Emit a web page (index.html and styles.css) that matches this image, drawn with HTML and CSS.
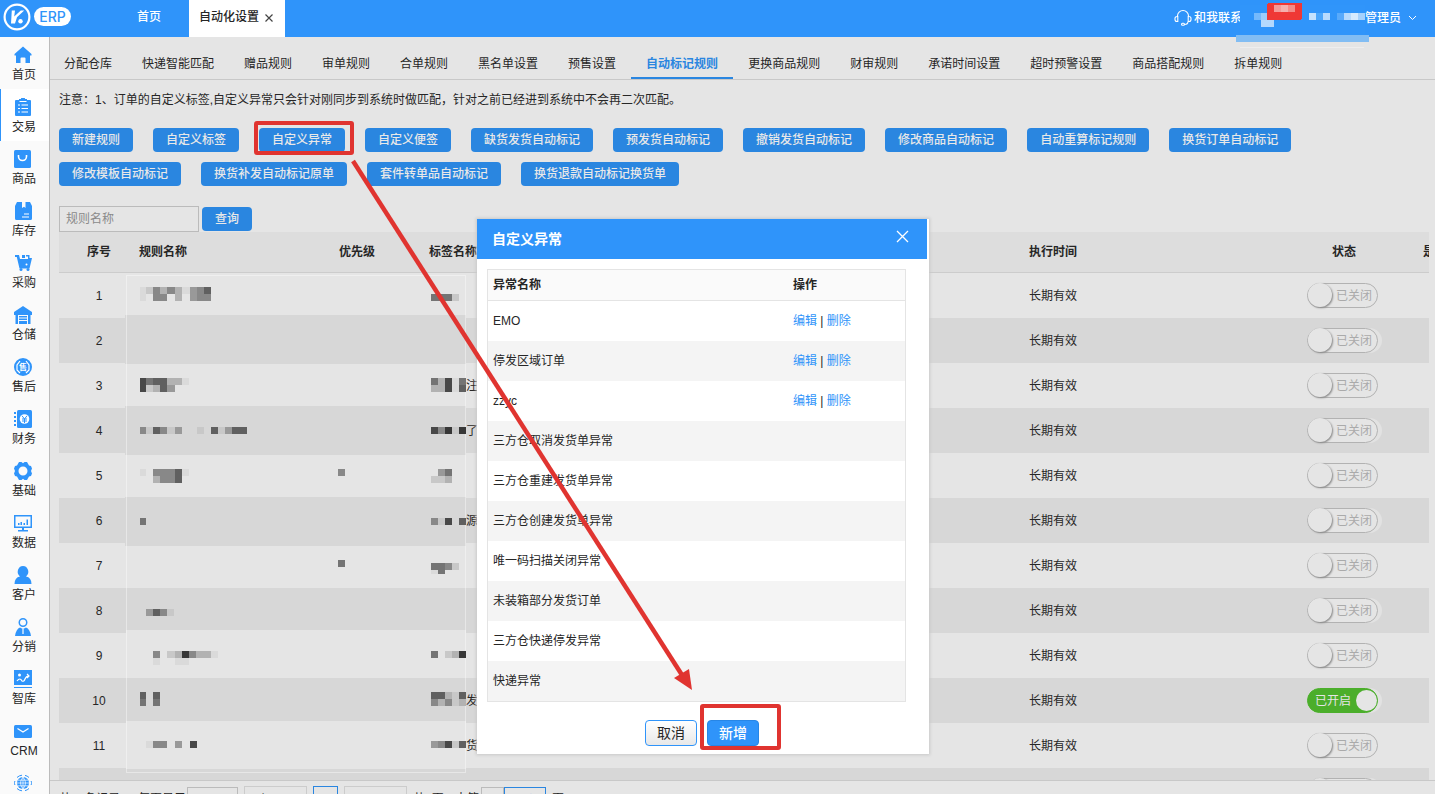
FILE: index.html
```html
<!DOCTYPE html>
<html lang="zh-CN">
<head>
<meta charset="utf-8">
<title>自动化设置</title>
<link rel="stylesheet" href="styles.css">
</head>
<body>
<div class="app">
<header class="topbar">
  <div class="brand">
    <svg class="brand-mark" width="28" height="28" viewBox="0 0 28 28"><circle cx="14" cy="14" r="12.4" fill="none" stroke="#fff" stroke-width="2.2"/><path d="M8.800 7.500h3.200l-.8 6L17.800 7.500h3.400l-7.200 6.700-2 6.400H8z" fill="#fff"/><circle cx="17.500" cy="18.300" r="2.200" fill="#fff"/></svg>
    <span class="brand-tag">ERP</span>
  </div>
  <nav class="page-tabs">
    <a class="page-tab" href="#">首页</a>
    <a class="page-tab current" href="#">自动化设置 <svg width="8" height="8" viewBox="0 0 8 8"><path d="M.5.5l7 7M7.500.5l-7 7" stroke="#444" stroke-width="1.200"/></svg></a>
  </nav>
  <div class="account">
    <a class="contact" href="#"><svg width="18" height="18" viewBox="0 0 18 18" fill="none" stroke="#fff" stroke-width="1.100"><path d="M3.500 7.500V7a5.500 5.500 0 0 1 11 0v.5M3.800 7.500H3a2 2 0 0 0-2 2v1a2 2 0 0 0 2 2h.8zM14.200 7.500h.8a2 2 0 0 1 2 2v1a2 2 0 0 1-2 2h-.8zM14 12.500c0 2-1.500 3-3.500 3"/><rect x="7.500" y="14.300" width="3" height="2" rx="1"/></svg><span>和我联系</span></a>
    <button class="user" type="button">管理员 <svg width="9" height="6" viewBox="0 0 9 6"><path d="M1 1l3.500 3.500L8 1" fill="none" stroke="#fff"/></svg></button>
    <svg class="account-mask" width="134" height="48" viewBox="1236 0 134 48" shape-rendering="crispEdges">
      <path fill="#3095fa" d="M1240 5h125v30h-125z"/>
      <path fill="#82bdf3" d="M1236 35h133v7h-133z"/>
      <path fill="#eee" d="M1240 47h124v1h-124z"/>
      <path fill="#75b9fc" d="M1254 13h7v7h-7z"/><path fill="#9cccfc" d="M1261 13h7v7h-7z"/><path fill="#b4d9fd" d="M1261 20h13v7h-13z"/>
      <path fill="#c5e2fd" d="M1309 13h7v7h-7z"/><path fill="#4ba6fb" d="M1316 13h7v7h-7z"/><path fill="#b7dafd" d="M1323 13h7v7h-7z"/>
      <path fill="#59aafb" d="M1337 13h7v7h-7z"/><path fill="#b7dafd" d="M1344 13h7v7h-7z"/><path fill="#d5eafe" d="M1351 13h7v7h-7z"/><path fill="#a5d1fc" d="M1358 13h7v7h-7z"/>
      <rect x="1267" y="3" width="35" height="17" rx="2" fill="#ef3835"/>
      <path fill="#f59a98" d="M1274 5h7v7h-7z"/><path fill="#f4b0ae" d="M1281 5h7v7h-7z"/><path fill="#f38b88" d="M1288 5h7v7h-7z"/>
    </svg>
  </div>
</header>
<div class="body">
<nav class="sidebar">
  <a href="#"><svg viewBox="0 0 18 18"><path d="M9 .5L17.500 8v1.500H16V17h-4.500v-4.500a1 1 0 0 0-1-1h-3a1 1 0 0 0-1 1V17H2V9.500H.5V8z"/></svg>首页</a>
  <a class="current" href="#"><svg viewBox="0 0 18 18"><path d="M2 2h3V1h2a2 2 0 0 1 4 0h2v1h3q1 0 1 1v14q0 1-1 1H2q-1 0-1-1V3q0-1 1-1z"/><path d="M4 7h2M7.500 7H14M4 10.500h2M7.500 10.500H14M4 14h2M7.500 14H14M5.500 3.500h7" class="line"/></svg>交易</a>
  <a href="#"><svg viewBox="0 0 18 18"><rect x="0" y="0" width="17" height="18" rx="1.500"/><path d="M4.500 5v1.500a4 4 0 0 0 8 0V5" class="line thick"/></svg>商品</a>
  <a href="#"><svg viewBox="0 0 18 18"><path d="M3 0h5v6l2-1.200L11.500 6V0H16l2 4v12.500q0 1.500-1.500 1.500h-14Q1 18 1 16.500V4z"/><path d="M10 12h5M8 15h7" class="line"/></svg>库存</a>
  <a href="#"><svg viewBox="0 0 18 18"><path d="M1 1h4l1 4h8V2.500h-2V1h3.500v3H18l-2.500 10.500H5.500L3.500 6 2.800 3H1z"/><path d="M8 1h3v3H8z"/><circle cx="7" cy="15.500" r="1.500"/><circle cx="14" cy="15.500" r="1.500"/><circle cx="12.500" cy="10.500" r="1" fill="#fff"/></svg>采购</a>
  <a href="#"><svg viewBox="0 0 18 18"><path d="M9 0l9 6v3h-1.500v9H14V9H4v9H1.500V9H0V6zM5 10h8v1.500H5zM5 12.500h8V14H5zM5 15h8v3H5z"/></svg>仓储</a>
  <a href="#"><svg viewBox="0 0 18 18"><circle cx="9" cy="9" r="9"/><path d="M6 3L3 7v5l3 3M12 3l3 4v5l-3 3" class="line"/><text x="9" y="12" text-anchor="middle" class="icon-text">售</text></svg>售后</a>
  <a href="#"><svg viewBox="0 0 18 18"><rect x="3" y="0" width="15" height="18" rx="1.500"/><path d="M0 2h2v2H0zM0 6h2v2H0zM0 10h2v2H0zM0 14h2v2H0z"/><circle cx="10.500" cy="9" r="4.800" fill="#fff"/><path d="M8 5.800L10.500 9 13 5.800M8 9h5M8 11h5M10.500 9v4" class="mark"/></svg>财务</a>
  <a href="#"><svg viewBox="0 0 18 18"><path fill-rule="evenodd" d="M5 0h2.500L9 1.200 10.500 0H13l2 3.500 2 .5 1 2.500L17 9l1 2.500-1 2.500-2 .5-2 3.500h-2.500L9 16.800 7.500 18H5l-2-3.500-2-.5-1-2.500L1 9 0 6.500 1 4l2-.5zM9 4.500a4.500 4.500 0 1 0 0 9 4.500 4.500 0 0 0 0-9z"/></svg>基础</a>
  <a href="#"><svg viewBox="0 0 18 18"><path fill-rule="evenodd" d="M0 1h18v13h-8v2h4v1.500H4V16h4v-2H0zM1.500 2.500v10h15v-10zM4 9h1.500v2H4zM6.500 8H8v3H6.500zM9.500 9H11v2H9.500zM12.500 5.500H14V11h-1.500z"/></svg>数据</a>
  <a href="#"><svg viewBox="0 0 18 18"><path d="M9 0a5.500 5.800 0 0 1 3 10.500q5.500 1 5.500 7.500H.5Q.5 11.500 6 10.500A5.500 5.800 0 0 1 9 0z"/></svg>客户</a>
  <a href="#"><svg viewBox="0 0 18 18"><path fill-rule="evenodd" d="M9 0a4.500 4.500 0 1 1 0 9 4.500 4.500 0 0 1 0-9zm0 1.500a3 3 0 1 0 0 6 3 3 0 0 0 0-6zM6 9.500l3 1.500 3-1.500q4 1.500 5 8.500H1q1-7 5-8.500z"/><path d="M9 11v5" class="line"/></svg>分销</a>
  <a href="#"><svg viewBox="0 0 18 18"><path d="M0 0h18v15H0zM0 17h18v1H0z"/><circle cx="5.500" cy="5" r="1.500" fill="#fff"/><path d="M3 11q3-4 5 0 2 1 3-2 1-3 4-3M13 4l2 2-2 2" class="line"/></svg>智库</a>
  <a href="#"><svg viewBox="0 0 18 18"><rect x="0" y="3" width="18" height="13" rx="1.500"/><path d="M3.500 6.500L9 10l5.500-3.500" class="line"/></svg>CRM</a>
  <a href="#"><svg viewBox="0 0 18 18"><circle cx="9" cy="9" r="6"/><path d="M3 9h12M9 3v12M4 6.200h10M4 11.800h10M9 3Q4 9 9 15M9 3q5 6 0 12" class="line thin"/><path d="M3 3.500a8 8 0 0 1 5-2.300M15 3.500a8 8 0 0 0-4-2.100M3 14.500a8 8 0 0 0 5 2.300M15 14.500a8 8 0 0 1-4 2.100M1 7L0 9l1 2M17 7l1 2-1 2" class="mark"/></svg></a>
</nav>
<main class="main">
  <nav class="rule-tabs">
    <a href="#">分配仓库</a><a href="#">快递智能匹配</a><a href="#">赠品规则</a><a href="#">审单规则</a><a href="#">合单规则</a><a href="#">黑名单设置</a><a href="#">预售设置</a><a class="current" href="#">自动标记规则</a><a href="#">更换商品规则</a><a href="#">财审规则</a><a href="#">承诺时间设置</a><a href="#">超时预警设置</a><a href="#">商品搭配规则</a><a href="#">拆单规则</a>
  </nav>
  <div class="content">
    <p class="notice">注意：1、订单的自定义标签,自定义异常只会针对刚同步到系统时做匹配，针对之前已经进到系统中不会再二次匹配。</p>
    <div class="actions">
      <button type="button" class="btn">新建规则</button><button type="button" class="btn">自定义标签</button><button type="button" class="btn">自定义异常</button><button type="button" class="btn">自定义便签</button><button type="button" class="btn">缺货发货自动标记</button><button type="button" class="btn">预发货自动标记</button><button type="button" class="btn">撤销发货自动标记</button><button type="button" class="btn">修改商品自动标记</button><button type="button" class="btn">自动重算标记规则</button><button type="button" class="btn">换货订单自动标记</button><button type="button" class="btn">修改模板自动标记</button><button type="button" class="btn">换货补发自动标记原单</button><button type="button" class="btn">套件转单品自动标记</button><button type="button" class="btn">换货退款自动标记换货单</button>
    </div>
    <form class="search">
      <input type="text" placeholder="规则名称" aria-label="规则名称">
      <button type="button" class="btn">查询</button>
    </form>
    <div class="grid">
      <table class="rules">
        <colgroup><col class="c-no"><col class="c-name"><col class="c-pri"><col><col class="c-time"><col class="c-state"><col class="c-more"></colgroup>
        <thead><tr><th class="mid">序号</th><th>规则名称</th><th>优先级</th><th>标签名称</th><th>执行时间</th><th class="mid">状态</th><th class="more">是否</th></tr></thead>
        <tbody>
          <tr><td class="mid">1</td><td></td><td></td><td class="tag"></td><td>长期有效</td><td class="mid"><label class="switch"><input type="checkbox"><span>已关闭</span></label></td><td></td></tr>
          <tr><td class="mid">2</td><td></td><td></td><td class="tag"></td><td>长期有效</td><td class="mid"><label class="switch"><input type="checkbox"><span>已关闭</span></label></td><td></td></tr>
          <tr><td class="mid">3</td><td></td><td></td><td class="tag">注</td><td>长期有效</td><td class="mid"><label class="switch"><input type="checkbox"><span>已关闭</span></label></td><td></td></tr>
          <tr><td class="mid">4</td><td></td><td></td><td class="tag">了</td><td>长期有效</td><td class="mid"><label class="switch"><input type="checkbox"><span>已关闭</span></label></td><td></td></tr>
          <tr><td class="mid">5</td><td></td><td></td><td class="tag"></td><td>长期有效</td><td class="mid"><label class="switch"><input type="checkbox"><span>已关闭</span></label></td><td></td></tr>
          <tr><td class="mid">6</td><td></td><td></td><td class="tag">源</td><td>长期有效</td><td class="mid"><label class="switch"><input type="checkbox"><span>已关闭</span></label></td><td></td></tr>
          <tr><td class="mid">7</td><td></td><td></td><td class="tag"></td><td>长期有效</td><td class="mid"><label class="switch"><input type="checkbox"><span>已关闭</span></label></td><td></td></tr>
          <tr><td class="mid">8</td><td></td><td></td><td class="tag"></td><td>长期有效</td><td class="mid"><label class="switch"><input type="checkbox"><span>已关闭</span></label></td><td></td></tr>
          <tr><td class="mid">9</td><td></td><td></td><td class="tag"></td><td>长期有效</td><td class="mid"><label class="switch"><input type="checkbox"><span>已关闭</span></label></td><td></td></tr>
          <tr><td class="mid">10</td><td></td><td></td><td class="tag">发</td><td>长期有效</td><td class="mid"><label class="switch"><input type="checkbox" checked><span>已开启</span></label></td><td></td></tr>
          <tr><td class="mid">11</td><td></td><td></td><td class="tag">货</td><td>长期有效</td><td class="mid"><label class="switch"><input type="checkbox"><span>已关闭</span></label></td><td></td></tr>
          <tr><td class="mid"></td><td></td><td></td><td class="tag"></td><td></td><td class="mid"><label class="switch"><input type="checkbox" aria-label="状态"><span></span></label></td><td></td></tr>
        </tbody>
      </table>
      <svg class="mosaic" width="342" height="499" viewBox="125 275 342 499" shape-rendering="crispEdges">
        <path fill="#e5e5e5" d="M126 275h340v498H126z"/>
        <path fill="#d7d7d7" d="M125 315h341v49H125zM125 406h341v49H125zM125 497h341v49H125zM125 588h341v42H125zM125 678h341v43H125zM125 769h341v4H125z"/>
        <path fill="none" stroke="#fff" stroke-opacity=".4" d="M126.500 275.500h339v497h-339z"/>
        <g stroke-width="7">
          <path stroke="#dadada" d="M140 290.500h6M182 290.500h8M140 297.500h6M182 381.500h7M452 381.500h7M452 388.500h7M140 472.500h6M182 472.500h7M431 570.500h7M211 654.500h7M153 661.500h7M175 661.500h14M146 744.500h7"/>
          <path stroke="#c8c8c8" d="M146 290.500h7M452 297.500h7M146 388.500h7M146 430.500h7M167 430.500h8M197 430.500h7M218 430.500h7M452 430.500h7M431 479.500h14M438 521.500h7M452 566.500h7M167 612.500h7M167 654.500h8M445 654.500h7M452 695.500h7M452 702.500h7M452 744.500h7"/>
          <path stroke="#b2b2b2" d="M160 290.500h7M175 290.500h7M175 297.500h7M167 381.500h15M153 388.500h7M438 381.500h7M431 388.500h14M153 479.500h7M445 479.500h7M175 654.500h7M196 654.500h15M452 654.500h7M445 695.500h7M438 702.500h7M459 702.500h7"/>
          <path stroke="#999" d="M190 290.500h7M190 297.500h7M167 388.500h8M175 430.500h7M225 430.500h7M438 472.500h7M146 612.500h7M175 744.500h7M431 744.500h7"/>
          <path stroke="#888" d="M153 290.500h7M167 290.500h8M197 290.500h7M153 297.500h14M197 297.500h14M140 430.500h6M160 430.500h7M438 430.500h7M153 472.500h22M160 479.500h15M338 472.500h7M431 521.500h7M445 566.500h7M160 612.500h7M153 654.500h7M189 654.500h7M431 702.500h7M445 702.500h7M153 744.500h14M438 744.500h7"/>
          <path stroke="#747474" d="M431 297.500h21M146 381.500h7M431 381.500h7M459 381.500h7M445 472.500h7M140 521.500h6M338 563.500h7M431 566.500h14M438 570.500h7M431 654.500h7M140 702.500h6M153 702.500h7"/>
          <path stroke="#606060" d="M204 290.500h7M153 381.500h14M160 388.500h7M459 388.500h7M153 430.500h7M211 430.500h7M232 430.500h15M175 472.500h7M175 479.500h7M459 521.500h7M153 612.500h7M140 695.500h6M153 695.500h7M431 695.500h14M459 695.500h7M459 744.500h7"/>
          <path stroke="#484848" d="M140 381.500h6M140 388.500h6M445 381.500h7M445 388.500h7M431 430.500h7M445 521.500h7M190 744.500h7M445 744.500h7"/>
          <path stroke="#373737" d="M445 430.500h7M459 430.500h7M182 654.500h7M459 654.500h7"/>
        </g>
      </svg>
    </div>
  </div>
  <footer class="pager">
    <span class="total">共12条记录，</span><span>每页显示</span>
    <input class="size" type="text" aria-label="每页条数">
    <button type="button" class="page">上一页</button>
    <button type="button" class="page on">1</button>
    <button type="button" class="page">下一页</button>
    <span class="count">共1页</span><span>去第</span>
    <span class="jump"><input type="text" aria-label="页码"><button type="button">确定</button></span>
    <span>页</span>
  </footer>
</main>
</div>
<section class="dialog" role="dialog" aria-labelledby="dialog-title">
  <header><h2 id="dialog-title">自定义异常</h2><button type="button" class="close" aria-label="关闭"><svg width="13" height="13" viewBox="0 0 13 13"><path d="M1 1l11 11M12 1L1 12" stroke="#fff" stroke-width="1.300"/></svg></button></header>
  <table class="exceptions">
    <colgroup><col class="e-name"><col></colgroup>
    <thead><tr><th>异常名称</th><th>操作</th></tr></thead>
    <tbody>
      <tr><td>EMO</td><td><a href="#">编辑</a> | <a href="#">删除</a></td></tr>
      <tr><td>停发区域订单</td><td><a href="#">编辑</a> | <a href="#">删除</a></td></tr>
      <tr><td>zzyc</td><td><a href="#">编辑</a> | <a href="#">删除</a></td></tr>
      <tr><td>三方仓取消发货单异常</td><td></td></tr>
      <tr><td>三方仓重建发货单异常</td><td></td></tr>
      <tr><td>三方仓创建发货单异常</td><td></td></tr>
      <tr><td>唯一码扫描关闭异常</td><td></td></tr>
      <tr><td>未装箱部分发货订单</td><td></td></tr>
      <tr><td>三方仓快递停发异常</td><td></td></tr>
      <tr><td>快递异常</td><td></td></tr>
    </tbody>
  </table>
  <div class="dialog-actions"><button type="button" class="cancel">取消</button><button type="button" class="add">新增</button></div>
</section>
<svg class="marks" width="800" height="760" fill="none" stroke="#e03430">
  <rect x="256" y="123" width="96" height="30" rx="1" stroke-width="4"/>
  <rect x="702" y="706" width="77" height="42" rx="1" stroke-width="4"/>
  <path d="M353 161L682 675" stroke-width="4.500"/>
  <path d="M692 690L674 678L689 669z" fill="#e03430" stroke="none"/>
</svg>
</div>
</body>
</html>
```
FILE: styles.css
```css
* { box-sizing: border-box; }
body {
  margin: 0;
  font: 12px/18px "Liberation Sans", "Noto Sans CJK SC", sans-serif;
  color: #262626;
  background: #e5e5e5;
}
button, input { font: inherit; color: inherit; }
a { color: inherit; text-decoration: none; }
svg { display: block; flex: none; }
table { border-collapse: separate; border-spacing: 0; table-layout: fixed; }
th { font-weight: bold; text-align: left; }

.app { position: relative; display: flex; flex-direction: column; height: 100vh; overflow: hidden; }
.topbar { display: flex; height: 37px; flex: none; background: #2f94fa; color: #fff; }
.brand { display: flex; align-items: center; gap: 3px; width: 109px; height: 33px; padding-left: 3px; }
.brand-tag {
  width: 37px; height: 19px; border-radius: 10px;
  background: #fff; color: #2f94fa;
  font: 500 14px/19px Inter, sans-serif; text-align: center;
}
.page-tabs { display: flex; flex: 1; line-height: 35px; font-weight: 500; }
.page-tab { width: 80px; text-align: center; }
.page-tab.current {
  display: flex; align-items: center; gap: 6px;
  width: 96px; height: 37px; padding: 0 0 2px 10px;
  background: #fff; color: #262626;
}
.account { position: relative; display: flex; align-items: center; height: 35px; padding-right: 18px; font-weight: 500; }
.contact { display: flex; align-items: center; gap: 2px; }
.contact svg { width: 18px; height: 18px; }
.user { display: flex; align-items: center; gap: 7px; margin-left: 123px; padding: 0; border: 0; background: none; font-weight: 500; }
.account-mask { position: absolute; right: 65px; top: 0; z-index: 1; }

.body { display: flex; flex: 1; min-height: 0; }
.sidebar { flex: none; width: 50px; overflow: hidden; background: #fafafa; border-right: 1px solid #bbb; }
.sidebar a {
  display: flex; flex-direction: column; align-items: center; gap: 2px;
  height: 52px; padding: 9px 2px 0 0; border-left: 1px solid transparent;
}
.sidebar a.current { background: #fff; border-color: #2f94fa; }
.sidebar svg { width: 18px; height: 18px; margin-right: 2px; fill: #2f94fa; }
.sidebar .line { fill: none; stroke: #fff; stroke-width: 1.2; }
.sidebar .mark { fill: none; stroke: #2f94fa; }
.sidebar .thick { stroke-width: 1.6; }
.sidebar .thin { stroke-width: 0.7; }
.icon-text { font-size: 8px; font-weight: bold; fill: #fff; }

.main { display: flex; flex-direction: column; flex: 1; min-width: 0; }
.rule-tabs { display: flex; flex: none; gap: 30px; height: 43px; padding: 0 14px; border-bottom: 1px solid #c8c8c8; line-height: 54px; white-space: nowrap; }
.rule-tabs .current { position: relative; color: #2a86e0; font-weight: bold; }
.rule-tabs .current::after { content: ""; position: absolute; left: -15px; right: -15px; top: 40px; height: 2px; background: #2a86e0; }
.content { display: flex; flex-direction: column; flex: 1; min-height: 0; padding: 11px 6px 0 9px; }
.notice { margin: 0; }
.actions { display: flex; flex-wrap: wrap; gap: 10px 20px; margin-top: 19px; }
.btn {
  height: 24px; padding: 0 13px; border: 0; border-radius: 4px;
  background: #2a86e0; color: #e8e8e8; line-height: 24px; font-weight: 500; white-space: nowrap;
}
.search { display: flex; align-items: center; gap: 3px; margin-top: 20px; }
.search input { width: 140px; height: 26px; padding: 0 6px; border: 1px solid #bbb; background: transparent; }
.search input::placeholder { color: #8a8a8a; opacity: 1; }

.grid { position: relative; flex: 1; min-height: 0; overflow: hidden; }
.rules { width: 100%; min-width: 1440px; }
.c-no { width: 80px; }
.c-name { width: 200px; }
.c-pri { width: 90px; }
.c-time { width: 270px; }
.c-state { width: 90px; }
.c-more { width: 110px; }
.rules th, .rules td { padding: 0; }
.rules th { height: 41px; border-bottom: 1px solid #ccc; background: #ddd; }
.rules td { height: 45px; }
.rules tbody tr:nth-child(even) { background: #d7d7d7; }
.rules .mid { text-align: center; }
.rules .more { padding-left: 34px; }
.rules .tag { padding-left: 37px; }
.mosaic { position: absolute; left: 66px; top: 43px; }

.switch { position: relative; display: block; width: 71px; height: 25px; margin-left: 8px; border-radius: 13px; background: #e5e5e5; box-shadow: 4px 0 0 #e2e2e2; color: #aaa; }
tr:nth-child(odd) .switch { box-shadow: none; }
.switch input { position: absolute; opacity: 0; margin: 0; }
.switch span { display: block; height: 25px; padding-left: 28px; border: 1px solid #b2b2b2; border-radius: 13px; line-height: 24px; text-align: left; }
.switch span::after { content: ""; position: absolute; left: 1px; top: 0; width: 24px; height: 24px; border-radius: 50%; background: #e5e5e5; box-shadow: 1px 1px 2px #888; }
.switch input:checked + span { padding-left: 7px; border-color: #4bae2b; background: #4bae2b; color: #e5e5e5; }
.switch input:checked + span::after { left: 49px; top: 2px; width: 21px; height: 21px; box-shadow: none; }

.pager { display: flex; flex: none; gap: 6px; height: 14px; padding: 5px 0 0 9px; border-top: 1px solid #c8c8c8; overflow: hidden; line-height: 26px; white-space: nowrap; }
.pager .total { width: 73px; }
.pager .size { width: 51px; height: 24px; margin: 1px 0 0 -5px; border: 1px solid #bbb; background: transparent; }
.page { flex: none; width: 63px; height: 26px; padding: 0; border: 1px solid #ccc; background: transparent; }
.page.on { width: 25px; border-color: #2a86e0; }
.pager .count { width: 36px; }
.jump { display: flex; margin: 1px 0 0 -4px; }
.jump input { width: 23px; height: 24px; border: 1px solid #bbb; background: transparent; }
.jump button { width: 42px; height: 24px; padding: 0; border: 1px solid #2a86e0; background: transparent; color: #2a86e0; }

.dialog { position: absolute; left: 477px; top: 219px; width: 452px; padding-bottom: 8px; background: #fff; box-shadow: 0 0 3px 1px #c8c8c8; }
.dialog header { display: flex; align-items: center; justify-content: space-between; height: 40px; margin-right: 2px; padding: 0 18px 0 15px; background: #2f94fa; color: #fff; }
.dialog h2 { margin: 0; font-size: 14px; line-height: 20px; font-weight: bold; }
.close { display: flex; height: 18px; padding: 0; border: 0; background: none; }
.exceptions { width: 419px; margin: 10px 0 0 10px; border: 1px solid #e4e4e4; }
.e-name { width: 300px; }
.exceptions th, .exceptions td { padding: 0 5px; }
.exceptions th { height: 31px; background: #fafafa; border-bottom: 1px solid #e4e4e4; }
.exceptions td { height: 40px; }
.exceptions tbody tr:nth-child(even) { background: #f4f4f4; }
.exceptions a { color: #2f94fa; }
.dialog-actions { display: flex; gap: 10px; margin: 18px 0 0 168px; }
.dialog-actions button { width: 52px; height: 26px; padding: 0; border: 1px solid #2f94fa; border-radius: 4px; font-size: 14px; line-height: 22px; }
.cancel { background: linear-gradient(#fff, #e8e8e8); }
.dialog-actions .add { background: #2f94fa; border-color: #2786e6; color: #fff; font-weight: 500; }

.marks { position: absolute; left: 0; top: 0; pointer-events: none; }
```
